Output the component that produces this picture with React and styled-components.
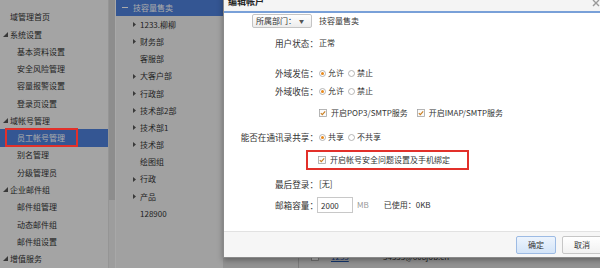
import React from 'react';
import styled, { createGlobalStyle } from 'styled-components';

const GlobalStyle = createGlobalStyle`
  html, body {
    margin: 0;
    padding: 0;
    overflow: hidden;
  }
  body {
    font-family: "Noto Sans CJK SC", "Noto Sans", sans-serif;
    line-height: 1.2;
    color: #333;
  }
  * {
    box-sizing: border-box;
  }
`;

const Page = styled.div`
  position: relative;
  display: flex;
  width: 600px;
  height: 268px;
  overflow: hidden;
  background: #dadada;
`;

/* ---------- left menu ---------- */

const Sidebar = styled.nav`
  width: 108px;
  flex-shrink: 0;
  padding-top: 8.4px;
  background: #f5f5f5;
`;

const NavItem = styled.div`
  position: relative;
  display: flex;
  align-items: center;
  gap: 2px;
  height: 17.29px;
  padding-left: ${p => (p.$sub ? 17 : p.$section ? 3 : 10)}px;
  font-size: 8px;
  white-space: nowrap;
  color: ${p => (p.$active ? '#fff' : '#333')};
  background: ${p => (p.$active ? '#4e80dc' : 'transparent')};
`;

const Annotation = styled.span`
  position: absolute;
  left: 5px;
  top: -1.5px;
  width: 73px;
  height: 19px;
  border: 2px solid #e2302a;
  z-index: 30;
`;

const ScrollTrack = styled.div`
  width: 7px;
  flex-shrink: 0;
  background: #ebebeb;
  border-left: 1px solid #dedede;
`;

const ScrollThumb = styled.div`
  height: 200px;
  background: #d3d3d3;
`;

/* ---------- department tree ---------- */

const TreePanel = styled.div`
  width: 108px;
  flex-shrink: 0;
  background: #f1f1f1;
  border-left: 1px solid #fbfbfb;
`;

const TreeRoot = styled.div`
  display: flex;
  align-items: center;
  gap: 5px;
  height: 16px;
  padding-left: 6px;
  font-size: 8px;
  color: #fff;
  background: #4e80dc;
`;

const TreeRow = styled.div`
  display: flex;
  align-items: center;
  gap: ${p => (p.$leaf ? 6 : 4)}px;
  height: 17.2px;
  padding-left: 17px;
  font-size: 8px;
  color: #333;
  white-space: nowrap;
`;

/* ---------- account list behind the dialog ---------- */

const Main = styled.main`
  flex: 1;
  display: flex;
  flex-direction: column;
  padding-left: 75px;
  background: #dadada;
`;

const Toolbar = styled.div`
  height: 32px;
  display: flex;
  align-items: center;
  gap: 8px;
  font-size: 8px;
`;

const TableHead = styled.div`
  height: 22px;
  display: flex;
  align-items: center;
  font-size: 8px;
  font-weight: bold;
  border-left: 1px solid #b8b8b8;
  padding-left: 33px;
`;

const TableRow = styled.div`
  height: 22px;
  display: flex;
  align-items: center;
  font-size: 8px;
  border-left: 1px solid #b8b8b8;
  padding-left: 12px;
`;

const NameCell = styled.a`
  width: 52px;
  margin-left: 12px;
  color: #1c4fa6;
  text-decoration: underline;
`;

const MailCell = styled.span`
  color: #333;
`;

const Overlay = styled.div`
  position: absolute;
  inset: 0;
  background: rgba(0, 0, 0, 0.33);
  z-index: 10;
`;

/* ---------- dialog ---------- */

const Dialog = styled.div`
  position: absolute;
  left: 223px;
  top: -7px;
  width: 392px;
  z-index: 20;
  background: #fff;
  border: 1px solid #8a8a8a;
  box-shadow: 0 2px 6px rgba(0, 0, 0, 0.35);
  font-size: 8px;
  color: #333;
`;

const DialogHeader = styled.div`
  height: 19px;
  display: flex;
  align-items: center;
  justify-content: space-between;
  padding: 0 14px 0 4px;
  background: #f4f4f4;
  border-bottom: 2px solid #79a0d8;
  font-size: 9px;
  font-weight: bold;
  color: #222;
`;

const DialogBody = styled.div`
  height: 218px;
  display: flex;
  flex-direction: column;
`;

const FormRow = styled.div`
  display: flex;
  align-items: center;
  height: ${p => p.$h || 18}px;
  margin-top: ${p => p.$mt || 0}px;
  white-space: nowrap;
`;

const Label = styled.div`
  width: 94px;
  flex-shrink: 0;
  display: flex;
  justify-content: flex-end;
  font-size: 8.6px;
  color: #333;
`;

const Value = styled.div`
  display: flex;
  align-items: center;
  padding-left: 1px;
`;

const SelectBox = styled.div`
  width: 60px;
  height: 14px;
  margin-right: 6px;
  display: flex;
  align-items: center;
  justify-content: space-between;
  padding: 0 7px 0 3px;
  border: 1px solid #c4c4c4;
  border-radius: 2px;
  background: linear-gradient(#ffffff, #ececec);
  font-size: 8px;
`;

const Caret = styled.span`
  font-size: 5px;
  color: #555;
`;

const Option = styled.span`
  display: inline-flex;
  align-items: center;
  gap: ${p => (p.$box ? 4 : 2)}px;
  margin-right: ${p => p.$space || 0}px;
`;

const Highlight = styled.span`
  display: inline-flex;
  align-items: center;
  height: 20px;
  margin-left: -13px;
  padding: 0 17px 0 10px;
  border: 2px solid #e2302a;
`;

const CapacityInput = styled.input`
  width: 36px;
  height: 16px;
  margin: 0 0 0 -2px;
  padding: 0 3px;
  border: 1px solid #c8c8c8;
  font-family: inherit;
  font-size: 8px;
  color: #333;
`;

const Unit = styled.span`
  margin-left: 4px;
  color: #999;
`;

const Used = styled.span`
  margin-left: 15px;
`;

const DialogFooter = styled.div`
  height: 26px;
  display: flex;
  align-items: center;
  justify-content: flex-end;
  gap: 6px;
  padding-right: 12px;
  border-top: 1px solid #e2e2e2;
  background: #f6f6f6;
`;

const Button = styled.button`
  width: 40px;
  height: 18px;
  padding: 0;
  font-family: inherit;
  font-size: 8px;
  color: #333;
  border-radius: 2px;
  border: 1px solid ${p => (p.$primary ? '#9dbbe4' : '#c6c6c6')};
  background: ${p =>
    p.$primary
      ? 'linear-gradient(#edf4fd, #d3e4f8)'
      : 'linear-gradient(#ffffff, #f1f1f1)'};
`;

/* ---------- small drawings ---------- */

const SectionCaret = () => (
  <svg width="5" height="5" viewBox="0 0 5 5">
    <polygon points="5,0 5,5 0,5" fill="#555" />
  </svg>
);

const TreeArrow = () => (
  <svg width="3" height="5" viewBox="0 0 3 5">
    <polygon points="0,0 3,2.5 0,5" fill="#555" />
  </svg>
);

const Radio = ({ checked }) => (
  <svg width="7" height="7" viewBox="0 0 7 7">
    <circle cx="3.5" cy="3.5" r="3" fill="#fff" stroke="#a3a3a3" strokeWidth="0.8" />
    {checked && <circle cx="3.5" cy="3.5" r="1.5" fill="#e8891c" />}
  </svg>
);

const CheckBox = () => (
  <svg width="8" height="8" viewBox="0 0 8 8">
    <rect x="0.5" y="0.5" width="7" height="7" fill="#fafafa" stroke="#a3a3a3" strokeWidth="0.8" />
    <path d="M1.8 4.1 L3.3 5.6 L6.2 2.3" fill="none" stroke="#c97c1d" strokeWidth="1.1" />
  </svg>
);

const CloseIcon = () => (
  <svg width="8" height="8" viewBox="0 0 8 8">
    <path d="M1 1 L7 7 M7 1 L1 7" stroke="#9a9a9a" strokeWidth="1.4" />
  </svg>
);

const menu = [
  { label: '域管理首页' },
  { label: '系统设置', section: true },
  { label: '基本资料设置', sub: true },
  { label: '安全风险管理', sub: true },
  { label: '容量报警设置', sub: true },
  { label: '登录页设置', sub: true },
  { label: '域帐号管理', section: true },
  { label: '员工帐号管理', sub: true, active: true },
  { label: '别名管理', sub: true },
  { label: '分级管理员', sub: true },
  { label: '企业邮件组', section: true },
  { label: '邮件组管理', sub: true },
  { label: '动态邮件组', sub: true },
  { label: '邮件组设置', sub: true },
  { label: '增值服务', section: true },
];

const departments = [
  { name: '1233.柳柳' },
  { name: '财务部' },
  { name: '客服部', leaf: true },
  { name: '大客户部' },
  { name: '行政部' },
  { name: '技术部2部' },
  { name: '技术部1' },
  { name: '技术部' },
  { name: '绘图组', leaf: true },
  { name: '行政' },
  { name: '产品' },
  { name: '128900', leaf: true },
];

const accounts = [
  ['admin', 'admin@608job.cn'],
  ['zhangwei', 'zhangwei@608job.cn'],
  ['liuyang', 'liuyang@608job.cn'],
  ['wangfang', 'wangfang@608job.cn'],
  ['chenjing', 'chenjing@608job.cn'],
  ['lina', 'lina@608job.cn'],
  ['sales01', 'sales01@608job.cn'],
  ['sales02', 'sales02@608job.cn'],
  ['service', 'service@608job.cn'],
  ['1233', '34555@608job.cn'],
];

function CheckBoxEmpty() {
  return (
    <svg width="8" height="8" viewBox="0 0 8 8">
      <rect x="0.5" y="0.5" width="7" height="7" fill="#fff" stroke="#999" strokeWidth="0.8" />
    </svg>
  );
}

export default function App() {
  return (
    <>
      <GlobalStyle />
      <Page>
        <Sidebar>
          {menu.map(item => (
            <NavItem
              key={item.label}
              $sub={item.sub}
              $section={item.section}
              $active={item.active}
            >
              {item.section && <SectionCaret />}
              {item.label}
              {item.active && <Annotation />}
            </NavItem>
          ))}
        </Sidebar>
        <ScrollTrack>
          <ScrollThumb />
        </ScrollTrack>

        <TreePanel>
          <TreeRoot>
            <svg width="6" height="2" viewBox="0 0 6 2">
              <rect width="6" height="1" fill="#fff" />
            </svg>
            技容量售卖
          </TreeRoot>
          {departments.map(d => (
            <TreeRow key={d.name} $leaf={d.leaf}>
              {d.leaf ? <span style={{ width: 1 }} /> : <TreeArrow />}
              {d.name}
            </TreeRow>
          ))}
        </TreePanel>

        <Main>
          <Toolbar>
            <span>新建帐号</span>
            <span>批量导入</span>
            <span>删除</span>
          </Toolbar>
          <TableHead>
            <span style={{ width: 52 }}>帐号</span>
            <span>邮箱地址</span>
          </TableHead>
          {accounts.map(([name, mail]) => (
            <TableRow key={name}>
              <CheckBoxEmpty />
              <NameCell>{name}</NameCell>
              <MailCell>{mail}</MailCell>
            </TableRow>
          ))}
        </Main>

        <Overlay />

        <Dialog>
          <DialogHeader>
            <span>编辑帐户</span>
            <CloseIcon />
          </DialogHeader>
          <DialogBody>
            <FormRow $h={15}>
              <Label>
                <SelectBox>
                  所属部门：<Caret>▼</Caret>
                </SelectBox>
              </Label>
              <Value>技容量售卖</Value>
            </FormRow>
            <FormRow $mt={6}>
              <Label>用户状态：</Label>
              <Value>正常</Value>
            </FormRow>
            <FormRow $mt={12}>
              <Label>外域发信：</Label>
              <Value>
                <Option $space={4}>
                  <Radio checked />
                  允许
                </Option>
                <Option>
                  <Radio />
                  禁止
                </Option>
              </Value>
            </FormRow>
            <FormRow>
              <Label>外域收信：</Label>
              <Value>
                <Option $space={4}>
                  <Radio checked />
                  允许
                </Option>
                <Option>
                  <Radio />
                  禁止
                </Option>
              </Value>
            </FormRow>
            <FormRow $mt={4}>
              <Label />
              <Value>
                <Option $box $space={9}>
                  <CheckBox />
                  开启POP3/SMTP服务
                </Option>
                <Option $box>
                  <CheckBox />
                  开启IMAP/SMTP服务
                </Option>
              </Value>
            </FormRow>
            <FormRow $mt={6}>
              <Label>能否在通讯录共享：</Label>
              <Value>
                <Option $space={4}>
                  <Radio checked />
                  共享
                </Option>
                <Option>
                  <Radio />
                  不共享
                </Option>
              </Value>
            </FormRow>
            <FormRow $mt={4} $h={20}>
              <Label />
              <Value>
                <Highlight>
                  <Option $box>
                    <CheckBox />
                    开启帐号安全问题设置及手机绑定
                  </Option>
                </Highlight>
              </Value>
            </FormRow>
            <FormRow $mt={5}>
              <Label>最后登录：</Label>
              <Value>[无]</Value>
            </FormRow>
            <FormRow $mt={3}>
              <Label>邮箱容量：</Label>
              <Value>
                <CapacityInput defaultValue="2000" />
                <Unit>MB</Unit>
                <Used>已使用：</Used>
                <span>0KB</span>
              </Value>
            </FormRow>
          </DialogBody>
          <DialogFooter>
            <Button $primary>确定</Button>
            <Button>取消</Button>
          </DialogFooter>
        </Dialog>
      </Page>
    </>
  );
}
